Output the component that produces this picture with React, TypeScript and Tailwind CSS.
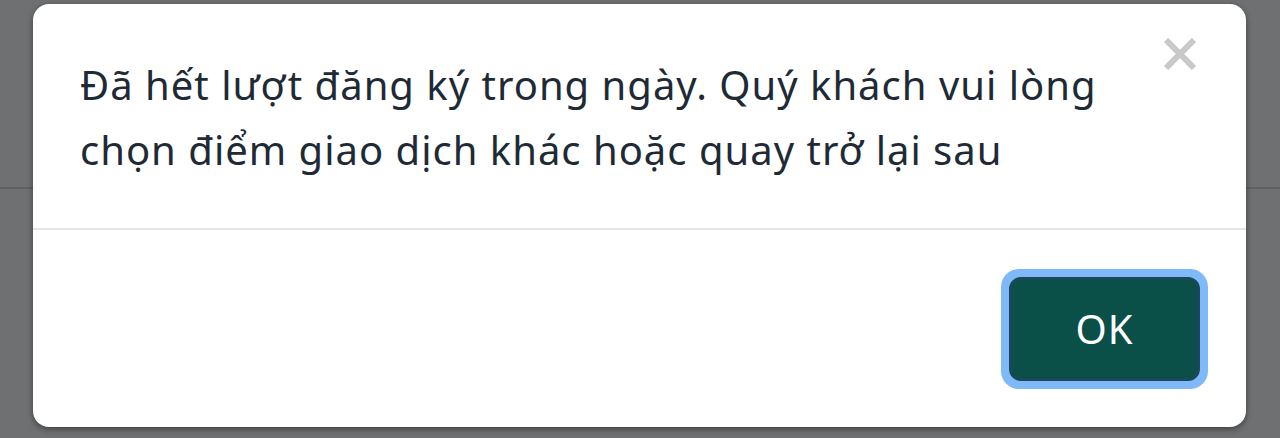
export default function App() {
  return (
    <div className="relative h-[438px] w-[1280px] overflow-hidden bg-[#6f7072] pt-[4px] pl-[33px]">
      <div className="absolute left-0 right-0 top-[187px] h-[2px] bg-[#606163]" />
      <div className="relative flex h-[423px] w-[1213px] flex-col rounded-[16px] bg-white shadow-[0_2px_6px_rgba(0,0,0,0.45)]">
        <div className="relative flex h-[224px] items-start pl-[47px] pr-[100px] pt-[48px]">
          <p
            className="whitespace-nowrap text-[40px] leading-[65px] tracking-[1px] text-[#1e2a35]"
            style={{ fontFamily: '"Noto Sans", sans-serif' }}
          >
            Đã hết lượt đăng ký trong ngày. Quý khách vui lòng
            <br />
            chọn điểm giao dịch khác hoặc quay trở lại sau
          </p>
          <button className="absolute right-[46px] top-[30px] flex h-[40px] w-[40px] items-center justify-center">
            <svg width="32" height="32" viewBox="0 0 32 32">
              <path d="M2 2 L30 30 M30 2 L2 30" stroke="#c9c9c9" strokeWidth="6" strokeLinecap="butt" />
            </svg>
          </button>
        </div>
        <div className="h-[2px] bg-[#e6e6e6]" />
        <div className="flex flex-1 items-center justify-end pr-[38px]">
          <div className="rounded-[18px] bg-[#80b9f8] p-[8px]">
            <button
              className="flex h-[104px] w-[191px] items-center justify-center rounded-[12px] border-[3px] border-[#1b4858] bg-[#0a4f48] text-[40px] tracking-[1px] text-white"
              style={{ fontFamily: '"Noto Sans", sans-serif' }}
            >
              OK
            </button>
          </div>
        </div>
      </div>
    </div>
  );
}
